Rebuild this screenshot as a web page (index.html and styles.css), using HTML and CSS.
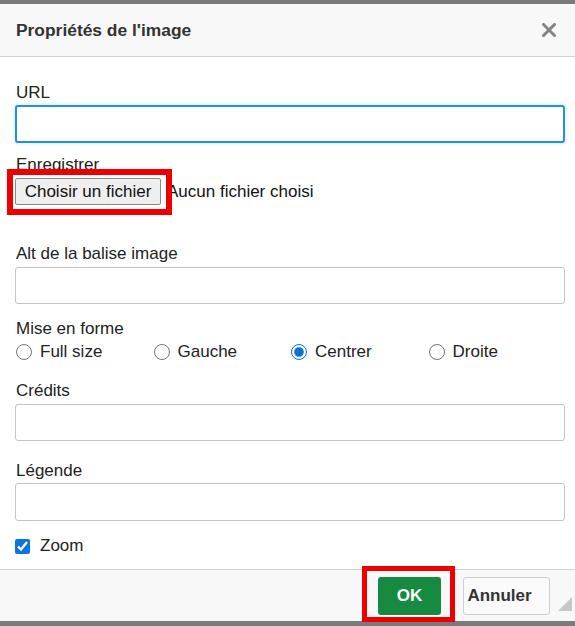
FILE: index.html
```html
<!DOCTYPE html>
<html lang="fr">
<head>
    <meta charset="UTF-8">
    <meta name="viewport" content="width=device-width, initial-scale=1.0">
    <title>Propriétés de l'image</title>
    <link rel="stylesheet" href="styles.css">
</head>
<body>
    <div class="dialog">
        <div class="dialog-header">
            <span class="dialog-title">Propriétés de l'image</span>
            <button class="close-btn" aria-label="Fermer">
                <svg width="14" height="14" viewBox="0 0 14 14">
                    <path d="M1.5 1.5 L12.5 12.5 M12.5 1.5 L1.5 12.5" stroke="#858585" stroke-width="3" stroke-linecap="square"/>
                </svg>
            </button>
        </div>

        <div class="dialog-body">
            <div class="field field-url">
                <label for="url">URL</label>
                <input type="text" id="url" class="text-input focused">
            </div>

            <div class="field field-upload">
                <label>Enregistrer</label>
                <div class="file-row">
                    <button class="file-btn">Choisir un fichier</button>
                    <span class="file-name">Aucun fichier choisi</span>
                    <span class="mark mark-file"></span>
                </div>
            </div>

            <div class="field field-alt">
                <label for="alt">Alt de la balise image</label>
                <input type="text" id="alt" class="text-input">
            </div>

            <div class="field field-format">
                <label>Mise en forme</label>
                <div class="radio-row">
                    <label class="radio"><input type="radio" name="format"> Full size</label>
                    <label class="radio"><input type="radio" name="format"> Gauche</label>
                    <label class="radio"><input type="radio" name="format" checked> Centrer</label>
                    <label class="radio"><input type="radio" name="format"> Droite</label>
                </div>
            </div>

            <div class="field field-credits">
                <label for="credits">Crédits</label>
                <input type="text" id="credits" class="text-input">
            </div>

            <div class="field field-legend">
                <label for="legend">Légende</label>
                <input type="text" id="legend" class="text-input tall">
            </div>

            <label class="check-row"><input type="checkbox" checked> Zoom</label>
        </div>

        <div class="dialog-footer">
            <span class="ok-wrap">
                <button class="btn btn-ok">OK</button>
            </span>
            <button class="btn btn-cancel">Annuler</button>
            <span class="grip"></span>
        </div>
    </div>
</body>
</html>
```

FILE: styles.css
```css
body {
    margin: 0;
    background-color: #7b7b7b;
    font-family: "Liberation Sans", Arial, sans-serif;
    font-size: 17px;
    color: #222;
}
.dialog {
    margin: 4px 0;
    background-color: #fff;
}
.dialog-header {
    height: 52px;
    display: flex;
    align-items: center;
    justify-content: space-between;
    padding: 0 19px 0 16px;
    background-color: #f8f8f8;
    border-bottom: 1px solid #d3d3d3;
}
.dialog-title {
    font-size: 17.4px;
    font-weight: bold;
    color: #333;
}
.close-btn {
    border: none;
    background: none;
    padding: 0;
    width: 14px;
    height: 14px;
    display: flex;
}

.dialog-body {
    padding: 27px 10px 14px 15px;
}
.field > label {
    display: block;
    line-height: 18px;
    padding-left: 1px;
    margin-bottom: 4px;
}
.text-input {
    display: block;
    box-sizing: border-box;
    width: 550px;
    height: 37px;
    margin: 0;
    border: 1px solid #c4c4c4;
    border-radius: 3px;
    background: #fff;
    font: inherit;
}
.text-input.tall {
    height: 38px;
}
.text-input.focused {
    height: 38px;
    border: 2px solid #1e90e6;
    box-shadow: 0 0 4px rgba(30, 144, 230, 0.25);
    outline: none;
}
.field-url > label { margin-bottom: 3px; }
.field-upload { margin-top: 13px; }
.field-alt { margin-top: 40px; }
.field-format { margin-top: 16px; }
.field-credits { margin-top: 20px; }
.field-legend { margin-top: 21px; }
.field-legend > label { margin-bottom: 3px; }

.file-row {
    position: relative;
    display: flex;
    align-items: center;
    height: 27px;
}
.file-btn {
    box-sizing: border-box;
    height: 27px;
    width: 146px;
    padding: 0;
    border: 1px solid #8a8a8a;
    border-radius: 2px;
    background-color: #efefef;
    font: inherit;
    color: #111;
}
.file-name {
    margin-left: 6px;
    color: #111;
}
/* red highlight drawn on the screenshot */
.mark {
    position: absolute;
    border: 6px solid #ee0000;
}
.mark-file {
    left: -8px;
    top: -9px;
    width: 153px;
    height: 34px;
}

.radio-row {
    display: grid;
    grid-template-columns: repeat(4, 137.5px);
    height: 20px;
}
.radio {
    display: flex;
    align-items: center;
    gap: 8px;
    padding-left: 1px;
    color: #222;
}
.radio input {
    width: 16px;
    height: 16px;
    margin: 0;
    accent-color: #0a6fd6;
}
.check-row {
    display: flex;
    align-items: center;
    gap: 10px;
    height: 18px;
    margin-top: 16px;
}
.check-row input {
    width: 15px;
    height: 15px;
    margin: 0;
    accent-color: #0b74de;
}

.dialog-footer {
    position: relative;
    height: 52px;
    box-sizing: border-box;
    display: flex;
    align-items: flex-start;
    justify-content: flex-end;
    gap: 8px;
    padding: 7px 25px 0 0;
    background-color: #f8f8f8;
    border-top: 1px solid #d3d3d3;
}
.ok-wrap {
    display: flex;
    margin-top: -11px;
    padding: 6px 9px 2px 11px;
    border: 5px solid #ee0000;
}
.btn {
    height: 38px;
    box-sizing: border-box;
    border-radius: 3px;
    font: inherit;
    font-weight: bold;
}
.btn-ok {
    width: 63px;
    border: none;
    background-color: #168a40;
    color: #fff;
}
.btn-cancel {
    width: 87px;
    padding: 0 14px 0 0;
    border: 1px solid #cfcfcf;
    background-color: #fafafa;
    color: #333;
}
.grip {
    position: absolute;
    right: 3px;
    bottom: 10px;
    width: 0;
    height: 0;
    border-left: 14px solid transparent;
    border-bottom: 14px solid #c8c8c8;
}
```
